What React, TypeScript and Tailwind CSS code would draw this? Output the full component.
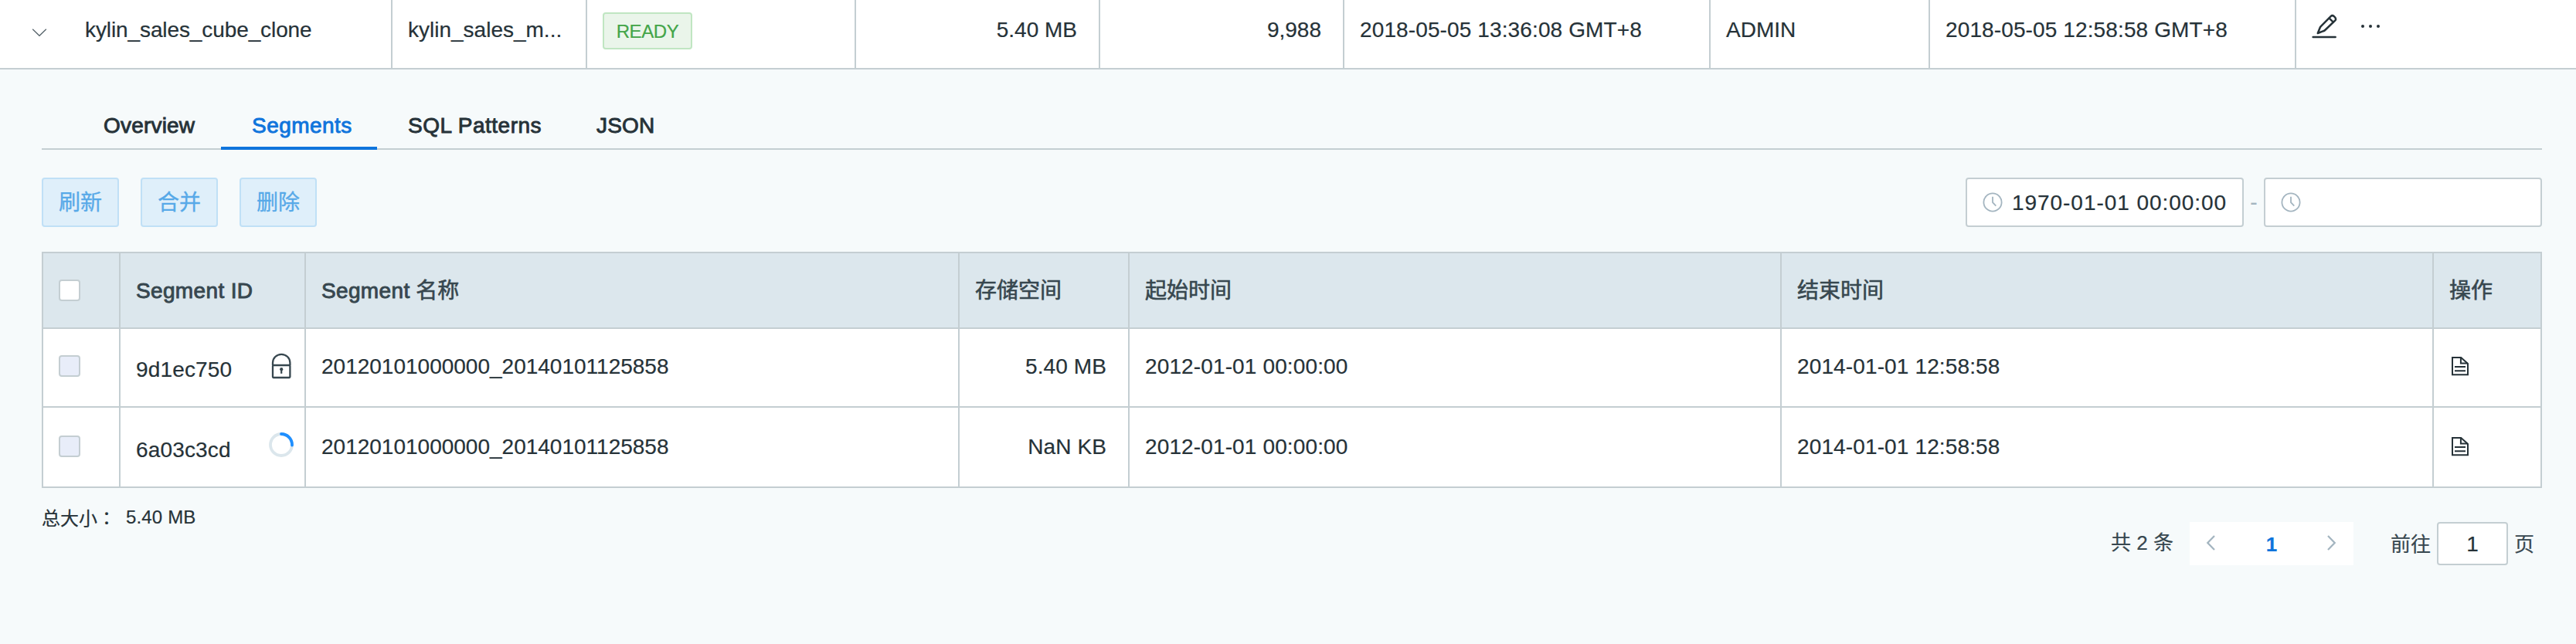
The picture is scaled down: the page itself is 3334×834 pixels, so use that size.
import React from 'react';

const medium = '[-webkit-text-stroke:0.9px_currentColor]';

function ChevronDown() {
  return (
    <svg className="mt-[36px] ml-[41px] h-[12px] w-[20px] shrink-0" viewBox="0 0 20 12" fill="none" stroke="#57646b" strokeWidth="1.3">
      <path d="M1.2 1.8 L10 10.3 L18.8 1.8" />
    </svg>
  );
}

function PencilIcon() {
  return (
    <svg className="h-[34px] w-[34px] shrink-0" viewBox="0 0 34 34" fill="none" stroke="#263238" strokeWidth="2.5" strokeLinejoin="round" strokeLinecap="round">
      <path d="M8.8 27 L11.6 20 Q12 19 12.8 18.2 L25.9 4.9 Q27.6 3.2 29.8 5.2 Q33.4 8.4 31.4 10.4 L18.2 23 Q17.2 24 16.2 24.2 Z" />
      <path d="M23.6 7.6 L28.8 12.6" />
      <path d="M2.6 32 H31.6" />
    </svg>
  );
}

function DotsIcon() {
  return (
    <svg className="mt-[32px] ml-[29px] h-[6px] w-[28px] shrink-0" viewBox="0 0 28 6" fill="#263238">
      <circle cx="4" cy="2" r="2" />
      <circle cx="14" cy="2" r="2" />
      <circle cx="24" cy="2" r="2" />
    </svg>
  );
}

function ClockIcon() {
  return (
    <svg className="h-[26px] w-[26px] shrink-0" viewBox="0 0 26 26" fill="none" stroke="#a4b5c0" strokeWidth="1.8">
      <circle cx="13" cy="13" r="11.6" />
      <path d="M13 5.8 V13.2 L17.3 17.6" />
    </svg>
  );
}

function LockIcon() {
  return (
    <svg className="h-[34px] w-[26px]" viewBox="0 0 26 34" fill="none" stroke="#37474f" strokeWidth="2.3">
      <path d="M2 16 V12.8 a11.2 11 0 0 1 22.4 0 V16" />
      <rect x="2" y="16" width="22.4" height="16" rx="1" />
      <circle cx="13.2" cy="21.2" r="2.1" fill="#37474f" stroke="none" />
      <path d="M13.2 21 V26.8" strokeWidth="2.2" />
    </svg>
  );
}

function Spinner() {
  return (
    <svg className="mb-1 h-[32px] w-[32px]" viewBox="0 0 32 32" fill="none" strokeWidth="3.8">
      <circle cx="16" cy="16" r="14" stroke="#dbe6ec" />
      <path d="M16 2 A14 14 0 0 1 30 16 V16.6" stroke="#1f8fff" strokeLinecap="round" />
    </svg>
  );
}

function DocIcon() {
  return (
    <svg className="h-[26px] w-[24px]" viewBox="0 0 24 26" fill="none" stroke="#263238" strokeWidth="2">
      <path d="M2 2 H13.2 L22 10 V24.2 H2 Z" />
      <path d="M12.9 2 V9.6 H22" />
      <path d="M5 14 H19 M5 19.2 H19" />
    </svg>
  );
}

function TopCell({ w, children, right }: { w: string; children?: React.ReactNode; right?: boolean }) {
  return (
    <div className={`${w} flex h-[88px] shrink-0 border-r-2 border-[#c4ced2] pt-4 pr-[28px] pl-5 leading-[45px] whitespace-nowrap ${right ? 'justify-end' : ''}`}>
      {children}
    </div>
  );
}

function Checkbox({ disabled }: { disabled?: boolean }) {
  return <span className={`block h-7 w-7 rounded-[4px] border-2 border-[#c4ced2] ${disabled ? 'bg-[#e8edf9]' : 'bg-white'}`} />;
}

const cols = 'grid grid-cols-[100px_240px_846px_220px_844px_844px_138px] leading-[44px]';
const cell = 'border-r-2 border-b-2 border-[#c4ced2] pl-5';

function HeadCell({ children, last }: { children: React.ReactNode; last?: boolean }) {
  return <div className={`border-b-2 border-[#c4ced2] pt-[27px] pl-5 ${last ? '' : 'border-r-2'}`}>{children}</div>;
}

function Row({ id, size, h, pad, icon }: { id: string; size: string; h: string; pad: string; icon: React.ReactNode }) {
  return (
    <div className={`${cols} ${h} bg-white text-[#263238]`}>
      <div className={`${cell} ${pad} flex items-center`}><Checkbox disabled /></div>
      <div className={`${cell} ${pad} flex items-center justify-between pr-[14px]`}>
        <span className="mt-[9px] tracking-[0.15px]">{id}</span>
        <span className="flex w-8 justify-center">{icon}</span>
      </div>
      <div className={`${cell} ${pad} flex items-center`}><span className="mt-px">20120101000000_20140101125858</span></div>
      <div className={`${cell} ${pad} flex items-center justify-end pr-[28px]`}><span className="mt-px tracking-[0.1px]">{size}</span></div>
      <div className={`${cell} ${pad} flex items-center`}><span className="mt-px tracking-[0.13px]">2012-01-01 00:00:00</span></div>
      <div className={`${cell} ${pad} flex items-center`}><span className="mt-px tracking-[0.13px]">2014-01-01 12:58:58</span></div>
      <div className={`${pad} flex items-center border-b-2 border-[#c4ced2] pl-[22px]`}><DocIcon /></div>
    </div>
  );
}

function Button({ children }: { children: string }) {
  return (
    <button className="h-16 w-[100px] rounded-[4px] border-2 border-[#c0e0f6] bg-[#dfeffa] pt-px text-[28px] leading-[60px] text-[#57a9e8] [-webkit-text-stroke:0.3px_currentColor]">
      {children}
    </button>
  );
}

function TimeInput({ value }: { value: string }) {
  return (
    <div className="flex h-16 w-[360px] items-center rounded-[4px] border-2 border-[#c4ced2] bg-white pl-5">
      <ClockIcon />
      <span className="ml-3 pt-[2px] leading-[44px] tracking-[0.95px] whitespace-nowrap">{value}</span>
    </div>
  );
}

export default function App() {
  return (
    <div className="flex h-[834px] w-[3334px] flex-col bg-[#f6fafb] font-['Liberation_Sans','Noto_Sans_CJK_SC',sans-serif] text-[28px] text-[#263238] [-webkit-text-stroke:0.2px_currentColor]">
      <div className="flex h-[90px] shrink-0 border-b-2 border-[#c4ced2] bg-white">
        <div className="flex h-[88px] w-[508px] shrink-0 border-r-2 border-[#c4ced2]">
          <ChevronDown />
          <span className="ml-[49px] pt-4 leading-[45px] tracking-[-0.1px]">kylin_sales_cube_clone</span>
        </div>
        <TopCell w="w-[252px]">kylin_sales_m...</TopCell>
        <TopCell w="w-[348px]">
          <span className="flex h-12 w-[116px] items-center justify-center rounded-[4px] border-2 border-[#c0e6c2] bg-[#eaf5ea] text-[24px] tracking-[-0.4px] text-[#43a548]">
            READY
          </span>
        </TopCell>
        <TopCell w="w-[316px]" right>5.40 MB</TopCell>
        <TopCell w="w-[316px]" right>9,988</TopCell>
        <TopCell w="w-[474px]"><span className="tracking-[0.12px]">2018-05-05 13:36:08 GMT+8</span></TopCell>
        <TopCell w="w-[284px]">ADMIN</TopCell>
        <TopCell w="w-[474px]"><span className="tracking-[0.12px]">2018-05-05 12:58:58 GMT+8</span></TopCell>
        <div className="flex pl-[19px]">
          <div className="pt-4"><PencilIcon /></div>
          <DotsIcon />
        </div>
      </div>

      <div className="flex flex-col pr-[44px] pl-[54px]">
        <div className={`flex h-[104px] border-b-2 border-[#c4ced2] pt-[50px] leading-[45px] whitespace-nowrap ${medium}`}>
          <div className="w-[232px] pl-[80px] tracking-[0.2px]">Overview</div>
          <div className="h-[54px] w-[202px] border-b-4 border-[#0f74dc] pl-[40px] tracking-[0.45px] text-[#0f74dc]">Segments</div>
          <div className="w-[246px] pl-[40px] tracking-[0.5px]">SQL Patterns</div>
          <div className="pl-[38px] tracking-[0.2px]">JSON</div>
        </div>

        <div className="mt-9 flex h-16 justify-between">
          <div className="flex gap-7">
            <Button>刷新</Button>
            <Button>合并</Button>
            <Button>删除</Button>
          </div>
          <div className="flex">
            <TimeInput value="1970-01-01 00:00:00" />
            <span className="w-[26px] text-center leading-[64px] text-[#a4b5c0]">-</span>
            <TimeInput value="" />
          </div>
        </div>

        <div className="mt-8 border-t-2 border-r-2 border-l-2 border-[#c4ced2]">
          <div className={`${cols} h-[98px] bg-[#dce7ed] text-[#37474f] [-webkit-text-stroke:0.6px_currentColor]`}>
            <div className={`${cell} pt-[34px]`}><Checkbox /></div>
            <HeadCell><span className={`tracking-[0.35px] ${medium}`}>Segment ID</span></HeadCell>
            <HeadCell><span className={`tracking-[0.35px] ${medium}`}>Segment</span> 名称</HeadCell>
            <HeadCell>存储空间</HeadCell>
            <HeadCell>起始时间</HeadCell>
            <HeadCell>结束时间</HeadCell>
            <HeadCell last>操作</HeadCell>
          </div>
          <Row id="9d1ec750" size="5.40 MB" h="h-[102px]" pad="pb-1" icon={<LockIcon />} />
          <Row id="6a03c3cd" size="NaN KB" h="h-[104px]" pad="pb-[2px]" icon={<Spinner />} />
        </div>

        <div className="mt-[18px] flex h-[40px] text-[24px] leading-[40px]">
          <span className="w-[109px] font-['Noto_Sans_CJK_TC',sans-serif]">总大小：</span>
          <span className="tracking-[0.15px]">5.40 MB</span>
        </div>

        <div className="mt-[-14px] flex h-14 items-center justify-end pr-[10px] text-[26px] leading-[56px] text-[#37474f]">
          <span className="mr-[21px] pb-[2px]">共 2 条</span>
          <div className="flex h-14 w-[212px] items-center justify-between bg-white px-[20px]">
            <svg className="mb-[2px] h-[22px] w-[14px]" viewBox="0 0 14 22" fill="none" stroke="#a4b5c0" strokeWidth="2.3">
              <path d="M12 2 L3.3 11 L12 20" />
            </svg>
            <span className="pt-px font-bold text-[#0f74dc]">1</span>
            <svg className="mb-[2px] h-[22px] w-[14px]" viewBox="0 0 14 22" fill="none" stroke="#a4b5c0" strokeWidth="2.3">
              <path d="M1 2 L9.7 11 L1 20" />
            </svg>
          </div>
          <span className="ml-[48px] pt-[2px]">前往</span>
          <span className="ml-2 h-14 w-[92px] rounded-[4px] border-2 border-[#c4ced2] bg-white text-center text-[28px] leading-[54px] text-[#263238]">1</span>
          <span className="ml-2 pt-[2px]">页</span>
        </div>
      </div>
    </div>
  );
}
